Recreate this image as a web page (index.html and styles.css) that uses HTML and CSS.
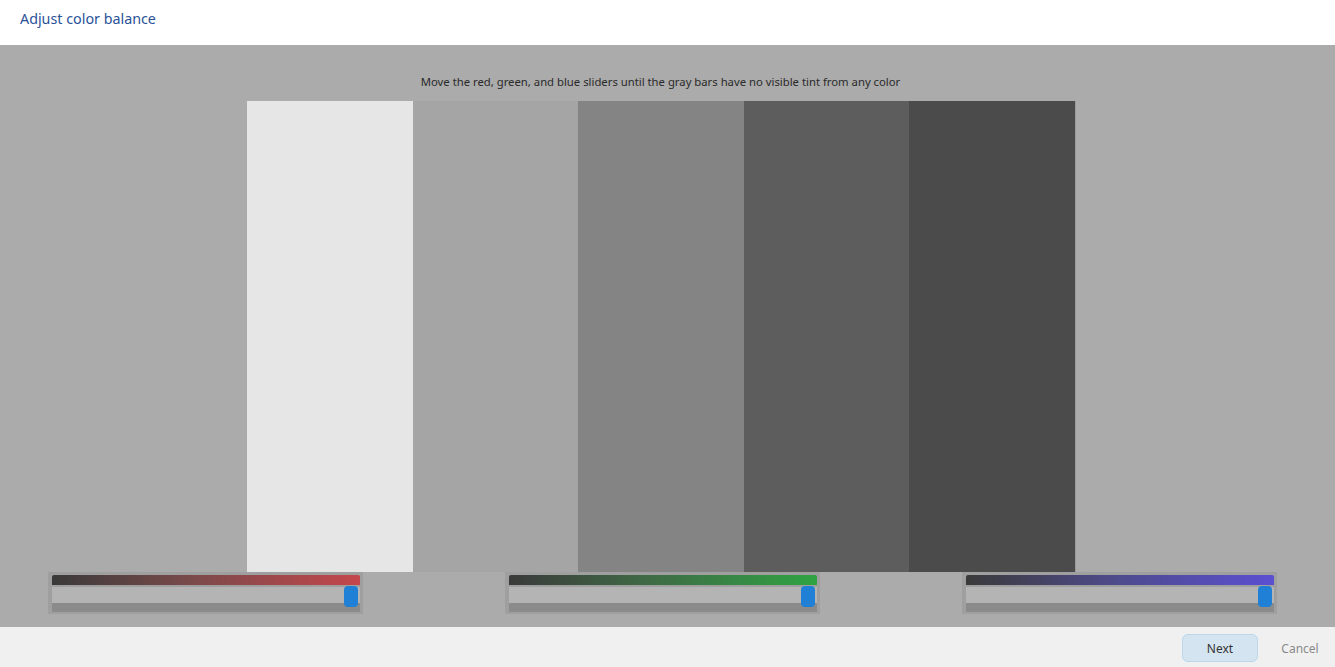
FILE: index.html
```html
<!DOCTYPE html>
<html lang="en">
<head>
<meta charset="utf-8">
<title>Adjust color balance</title>
<link rel="stylesheet" href="styles.css">
</head>
<body>
<div class="window">
  <header class="header">
    <h1 class="title">Adjust color balance</h1>
  </header>
  <main class="stage">
    <p class="hint">Move the red, green, and blue sliders until the gray bars have no visible tint from any color</p>
    <div class="bars">
      <div class="bar bar-1"></div>
      <div class="bar bar-2"></div>
      <div class="bar bar-3"></div>
      <div class="bar bar-4"></div>
      <div class="bar bar-5"></div>
    </div>
    <div class="sliders">
      <div class="slider">
        <div class="strip strip-red"></div>
        <div class="track"><div class="thumb"></div></div>
        <div class="shade"></div>
      </div>
      <div class="slider">
        <div class="strip strip-green"></div>
        <div class="track"><div class="thumb"></div></div>
        <div class="shade"></div>
      </div>
      <div class="slider">
        <div class="strip strip-blue"></div>
        <div class="track"><div class="thumb"></div></div>
        <div class="shade"></div>
      </div>
    </div>
  </main>
  <footer class="footer">
    <button class="btn btn-primary">Next</button>
    <button class="btn btn-plain">Cancel</button>
  </footer>
</div>
</body>
</html>
```

FILE: styles.css
```css
* { box-sizing: border-box; }
html, body { margin: 0; padding: 0; }
body {
  width: 1335px;
  height: 667px;
  overflow: hidden;
  font-family: "Noto Sans", "DejaVu Sans", "Liberation Sans", sans-serif;
  background: #f0f0f0;
}
.window { display: flex; flex-direction: column; height: 667px; }
.header {
  height: 45px;
  background: #ffffff;
  display: flex;
  align-items: center;
  padding: 0 0 9px 20px;
}
.title {
  margin: 0;
  font-size: 14.3px;
  font-weight: 400;
  color: #2a5298;
}
.stage {
  height: 582px;
  background: #ababab;
  display: flex;
  flex-direction: column;
}
.hint {
  margin: 29px 0 0 0;
  height: 27px;
  text-align: center;
  padding-right: 14px;
  font-size: 11.3px;
  line-height: 16px;
  color: #2a2a2a;
}
.bars {
  display: flex;
  margin-left: 247px;
  width: 828px;
  height: 471px;
}
.bar { flex: 1; }
.bar-1 { background: #e6e6e6; }
.bar-2 { background: #a5a5a5; }
.bar-3 { background: #848484; }
.bar-4 { background: #5d5d5d; }
.bar-5 { background: #4b4b4b; box-shadow: 1px 0 0 #9a9a9a; }
.sliders {
  display: flex;
  gap: 142px;
  margin-left: 48px;
}
.slider {
  width: 315px;
  height: 42px;
  background: #9f9f9f;
  padding: 3px 3px 0 4px;
  display: flex;
  flex-direction: column;
}
.strip { height: 10px; border-radius: 2px 2px 0 0; }
.strip-red { background: linear-gradient(to right, #3a3a3a, #7a4a4a 45%, #c4474c); }
.strip-green { background: linear-gradient(to right, #3a3a3a, #3f6a45 45%, #2fa343); }
.strip-blue { background: linear-gradient(to right, #3a3a3a, #4d4a86 45%, #5b4fd1); }
.track {
  position: relative;
  height: 16px;
  margin-top: 2px;
  background: #b4b4b4;
}
.thumb {
  position: absolute;
  right: 2px;
  top: -1px;
  width: 14px;
  height: 21px;
  border-radius: 4px;
  background: #1f80d6;
}
.shade { height: 9px; background: #8b8b8b; }
.footer {
  flex: 1;
  background: #f0f0f0;
  display: flex;
  align-items: center;
  justify-content: flex-end;
  padding: 2px 10px 0 0;
  gap: 17px;
}
.btn {
  font-family: inherit;
  font-size: 12px;
  height: 28px;
  padding: 0;
  cursor: default;
}
.btn-primary {
  width: 76px;
  background: #d4e5f1;
  border: 1px solid #bcd6ea;
  border-radius: 6px;
  color: #333;
}
.btn-plain {
  width: 50px;
  background: transparent;
  border: none;
  color: #8a8a8a;
}
```
